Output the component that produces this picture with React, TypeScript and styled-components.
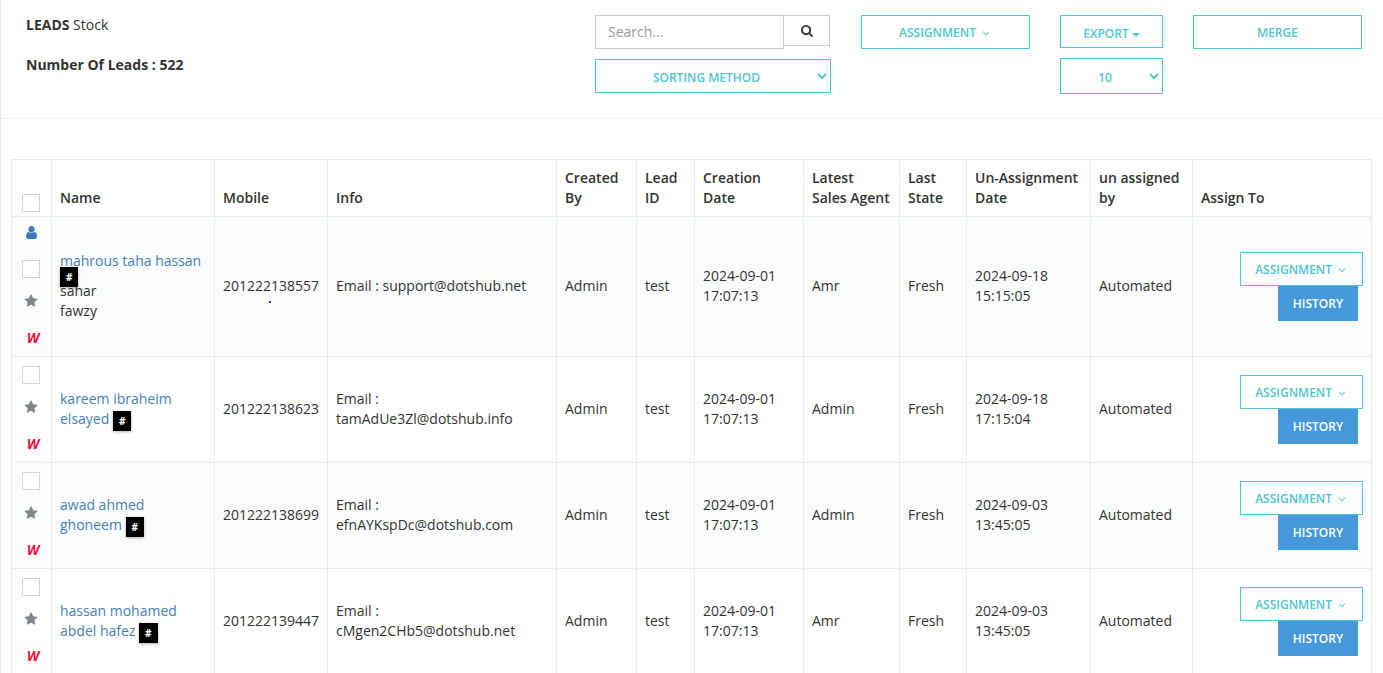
import React from "react";
import styled, { createGlobalStyle } from "styled-components";

const TEAL = "#4fc6d1";
const LINE = "#e7ecf1";

const GlobalStyle = createGlobalStyle`
  *, *::before, *::after { box-sizing: border-box; }
  html { scrollbar-width: none; }
  body {
    margin: 0;
    background: #fff;
    color: #333;
    font-family: "Open Sans", "Noto Sans", sans-serif;
    font-size: 14px;
    line-height: 20px;
  }
  button, input, select { font-family: inherit; margin: 0; }
`;

const Page = styled.main`
  min-height: 100vh;
  border-left: 1px solid ${LINE};
`;

const Toolbar = styled.header`
  display: grid;
  grid-template-columns: minmax(0, 539fr) minmax(0, 236fr) minmax(0, 169fr) minmax(0, 103fr) minmax(0, 169fr);
  column-gap: 30px;
  align-items: start;
  padding: 15px 21px 24px 25px;
  border-bottom: 1px solid #eef1f5;
`;

const Summary = styled.div`
  display: flex;
  flex-direction: column;
  gap: 20px;
`;

const Title = styled.h1`
  margin: 0;
  font-size: 14px;
  line-height: 20px;
  font-weight: 400;
`;

const Strong = styled.span`
  font-weight: 700;
`;

const Count = styled.p`
  margin: 0;
  font-weight: 700;
`;

const Controls = styled.div`
  display: flex;
  flex-direction: column;
  gap: 10px;
`;

const SearchForm = styled.form`
  display: flex;
  align-items: flex-start;
  padding-right: 1px;
`;

const SearchInput = styled.input`
  flex: 1;
  min-width: 0;
  height: 34px;
  padding: 5px 12px 7px;
  border: 1px solid #c2cad8;
  border-radius: 0;
  background: #fff;
  color: #555;
  font-size: 14px;
  outline: none;
  &::placeholder { color: #999; opacity: 1; }
`;

const SearchButton = styled.button`
  display: flex;
  align-items: center;
  justify-content: center;
  width: 47px;
  height: 31px;
  margin-left: -1px;
  padding: 0;
  border: 1px solid #ccc;
  background: #fff;
  color: #333;
`;

const OutlineButton = styled.button<{ $height?: number; $gap?: number; $drop?: number }>`
  display: flex;
  align-items: center;
  justify-content: center;
  gap: ${(p) => p.$gap ?? 4}px;
  height: ${(p) => p.$height ?? 34}px;
  padding: ${(p) => p.$drop ?? 2}px 14px 0;
  border: 1px solid ${TEAL};
  border-radius: 0;
  background: transparent;
  color: ${TEAL};
  font-size: 12px;
  line-height: 18px;
  font-weight: 600;
  text-transform: uppercase;
`;

const Select = styled.select<{ $height?: number }>`
  width: 100%;
  height: ${(p) => p.$height ?? 34}px;
  padding: 8px 1px 6px 0;
  border: 1px solid ${TEAL};
  border-radius: 0;
  background: #fff;
  color: ${TEAL};
  font-size: 12px;
  font-weight: 600;
  text-align: center;
  text-transform: uppercase;
`;

const Caret = styled.span`
  margin-top: 3px;
  border-top: 4px solid ${TEAL};
  border-left: 4px solid transparent;
  border-right: 4px solid transparent;
`;

const Content = styled.section`
  padding: 40px 11px 20px 10px;
`;

const Table = styled.table`
  width: 100%;
  table-layout: fixed;
  border-collapse: collapse;
  border: 1px solid ${LINE};
`;

const Col = styled.col<{ $width?: number }>`
  width: ${(p) => (p.$width ? `${p.$width}px` : "auto")};
`;

const Th = styled.th`
  padding: 8px;
  border: 1px solid ${LINE};
  font-weight: 600;
  text-align: left;
  vertical-align: bottom;
`;

const CheckTh = styled(Th)`
  padding: 8px 9px 4px 8px;
`;

const Row = styled.tr`
  &:nth-child(odd) { background: #fbfcfd; }
`;

const Td = styled.td`
  padding: 8px 8px 9px;
  border: 1px solid ${LINE};
  vertical-align: middle;
`;

const MarksTd = styled(Td)`
  padding: 8px 9px 8px 8px;
`;

const ActionsTd = styled(Td)`
  padding: 8px;
`;

const Checkbox = styled.input`
  appearance: none;
  display: block;
  width: 18px;
  height: 18px;
  margin: 0 auto;
  border: 1px solid #d3d5d8;
  background: #fff;
`;

const Marks = styled.div`
  display: flex;
  flex-direction: column;
  align-items: center;
`;

const MarkIcon = styled.span<{ $color: string; $space: number }>`
  display: flex;
  margin-bottom: ${(p) => p.$space}px;
  color: ${(p) => p.$color};
`;

const MarkCheck = styled(Checkbox)`
  margin: 1px 0 16px;
`;

const Letter = styled.span`
  padding-left: 4px;
  color: #f0103c;
  font-style: italic;
  font-weight: 700;
`;

const NameLink = styled.a`
  color: #4680b8;
  text-decoration: none;
`;

const Badge = styled.a`
  position: relative;
  padding: 3px 6px;
  background: #000;
  box-shadow: 0 1px 3px rgba(0, 0, 0, 0.3);
  color: #fff;
  font-size: 10px;
  line-height: 10px;
  font-weight: 700;
  text-decoration: none;
  vertical-align: -1px;
`;

const BadgeLine = styled.div`
  height: 10px;
  font-size: 10px;
  line-height: 10px;
`;

const Mobile = styled.div`
  position: relative;
`;

const Dot = styled.span`
  position: absolute;
  left: 46px;
  top: 25px;
  width: 2px;
  height: 2px;
  background: #2a2aff;
`;

const Actions = styled.div`
  display: flex;
  flex-direction: column;
  align-items: flex-end;
`;

const HistoryButton = styled.button`
  height: 35px;
  margin-right: 5px;
  padding: 0 15px;
  border: 0;
  background: #4599db;
  color: #fff;
  font-size: 12px;
  font-weight: 600;
  text-transform: uppercase;
`;

const icons = {
  search: {
    box: "0 0 1664 1664",
    d: "M1152 704q0-185-131.5-316.5t-316.5-131.5-316.5 131.5-131.5 316.5 131.5 316.5 316.5 131.5 316.5-131.5 131.5-316.5zm512 832q0 52-38 90t-90 38q-54 0-90-38l-343-342q-179 124-399 124-143 0-273.5-55.5t-225-150-150-225-55.5-273.5 55.5-273.5 150-225 225-150 273.5-55.5 273.5 55.5 225 150 150 225 55.5 273.5q0 220-124 399l343 343q37 37 37 90z",
  },
  user: {
    box: "0 0 1792 1792",
    d: "M1536 1399q0 109-62.5 187t-150.5 78h-854q-88 0-150.5-78t-62.5-187q0-85 8.5-160.5t31.5-152 58.5-131 94-89 134.5-34.5q131 128 313 128t313-128q76 0 134.5 34.5t94 89 58.5 131 31.5 152 8.5 160.5zm-256-887q0 159-112.5 271.5t-271.5 112.5-271.5-112.5-112.5-271.5 112.5-271.5 271.5-112.5 271.5 112.5 112.5 271.5z",
  },
  star: {
    box: "0 0 1792 1792",
    d: "M1728 647q0 22-26 48l-363 354 86 500q1 7 1 20 0 21-10.5 35.5t-30.5 14.5q-19 0-40-12l-449-236-449 236q-22 12-40 12-21 0-31.5-14.5t-10.5-35.5q0-6 2-20l86-500-364-354q-25-27-25-48 0-37 56-46l502-73 225-455q19-41 49-41t49 41l225 455 502 73q56 9 56 46z",
  },
  angle: {
    box: "0 0 1792 1792",
    d: "M1395 736q0 13-10 23l-466 466q-10 10-23 10t-23-10l-466-466q-10-10-10-23t10-23l50-50q10-10 23-10t23 10l393 393 393-393q10-10 23-10t23 10l50 50q10 10 10 23z",
  },
};

function Icon({ name, size }: { name: keyof typeof icons; size: number }) {
  return (
    <svg width={size} height={size} viewBox={icons[name].box} fill="currentColor" aria-hidden="true">
      <path d={icons[name].d} />
    </svg>
  );
}

interface Lead {
  name: string;
  extra?: string[];
  mobile: string;
  email: string;
  created: string;
  agent: string;
  unassigned: string;
  owned?: boolean;
}

const leads: Lead[] = [
  {
    name: "mahrous taha hassan",
    extra: ["sahar", "fawzy"],
    mobile: "201222138557",
    email: "support@dotshub.net",
    created: "2024-09-01 17:07:13",
    agent: "Amr",
    unassigned: "2024-09-18 15:15:05",
    owned: true,
  },
  {
    name: "kareem ibraheim elsayed",
    mobile: "201222138623",
    email: "tamAdUe3Zl@dotshub.info",
    created: "2024-09-01 17:07:13",
    agent: "Admin",
    unassigned: "2024-09-18 17:15:04",
  },
  {
    name: "awad ahmed ghoneem",
    mobile: "201222138699",
    email: "efnAYKspDc@dotshub.com",
    created: "2024-09-01 17:07:13",
    agent: "Admin",
    unassigned: "2024-09-03 13:45:05",
  },
  {
    name: "hassan mohamed abdel hafez",
    mobile: "201222139447",
    email: "cMgen2CHb5@dotshub.net",
    created: "2024-09-01 17:07:13",
    agent: "Amr",
    unassigned: "2024-09-03 13:45:05",
  },
];

const columns: { label: React.ReactNode; key: string; width?: number }[] = [
  { key: "name", label: "Name", width: 163 },
  { key: "mobile", label: "Mobile", width: 113 },
  { key: "info", label: "Info" },
  { key: "createdBy", label: "Created By", width: 80 },
  { key: "leadId", label: "Lead ID", width: 58 },
  { key: "created", label: <>Creation<br />Date</>, width: 109 },
  { key: "agent", label: <>Latest<br />Sales Agent</>, width: 96 },
  { key: "state", label: "Last State", width: 67 },
  { key: "unassigned", label: "Un-Assignment Date", width: 124 },
  { key: "unassignedBy", label: "un assigned by", width: 102 },
  { key: "assign", label: "Assign To", width: 179 },
];

function LeadRow({ lead }: { lead: Lead }) {
  return (
    <Row>
      <MarksTd>
        <Marks>
          {lead.owned && (
            <MarkIcon $color="#3d7ab8" $space={19}>
              <Icon name="user" size={15} />
            </MarkIcon>
          )}
          <MarkCheck type="checkbox" aria-label={`Select ${lead.name}`} />
          <MarkIcon $color="#80868c" $space={20}>
            <Icon name="star" size={14} />
          </MarkIcon>
          <Letter>W</Letter>
        </Marks>
      </MarksTd>
      <Td>
        <NameLink href="#lead">{lead.name}</NameLink>{" "}
        {lead.extra ? (
          <>
            <BadgeLine>
              <Badge href="#tag">#</Badge>
            </BadgeLine>
            {lead.extra.map((line) => (
              <div key={line}>{line}</div>
            ))}
          </>
        ) : (
          <Badge href="#tag">#</Badge>
        )}
      </Td>
      <Td>
        <Mobile>
          {lead.mobile}
          {lead.owned && <Dot />}
        </Mobile>
      </Td>
      <Td>Email : {lead.email}</Td>
      <Td>Admin</Td>
      <Td>test</Td>
      <Td>{lead.created}</Td>
      <Td>{lead.agent}</Td>
      <Td>Fresh</Td>
      <Td>{lead.unassigned}</Td>
      <Td>Automated</Td>
      <ActionsTd>
        <Actions>
          <OutlineButton type="button">
            Assignment
            <Icon name="angle" size={12} />
          </OutlineButton>
          <HistoryButton type="button">History</HistoryButton>
        </Actions>
      </ActionsTd>
    </Row>
  );
}

export default function App() {
  return (
    <>
      <GlobalStyle />
      <Page>
        <Toolbar>
          <Summary>
            <Title>
              <Strong>LEADS</Strong> Stock
            </Title>
            <Count>Number Of Leads : 522</Count>
          </Summary>
          <Controls>
            <SearchForm onSubmit={(e) => e.preventDefault()}>
              <SearchInput type="text" placeholder="Search..." aria-label="Search" />
              <SearchButton type="submit" aria-label="Run search">
                <Icon name="search" size={12} />
              </SearchButton>
            </SearchForm>
            <Select aria-label="Sorting method">
              <option>Sorting Method</option>
            </Select>
          </Controls>
          <OutlineButton type="button">
            Assignment
            <Icon name="angle" size={12} />
          </OutlineButton>
          <Controls>
            <OutlineButton type="button" $height={33} $gap={3} $drop={4}>
              Export
              <Caret />
            </OutlineButton>
            <Select $height={36} aria-label="Rows per page">
              <option>10</option>
            </Select>
          </Controls>
          <OutlineButton type="button">Merge</OutlineButton>
        </Toolbar>
        <Content>
          <Table>
            <colgroup>
              <Col $width={40} />
              {columns.map((c) => (
                <Col key={c.key} $width={c.width} />
              ))}
            </colgroup>
            <thead>
              <tr>
                <CheckTh scope="col">
                  <Checkbox type="checkbox" aria-label="Select all" />
                </CheckTh>
                {columns.map((c) => (
                  <Th key={c.key} scope="col">
                    {c.label}
                  </Th>
                ))}
              </tr>
            </thead>
            <tbody>
              {leads.map((lead) => (
                <LeadRow key={lead.mobile} lead={lead} />
              ))}
            </tbody>
          </Table>
        </Content>
      </Page>
    </>
  );
}
